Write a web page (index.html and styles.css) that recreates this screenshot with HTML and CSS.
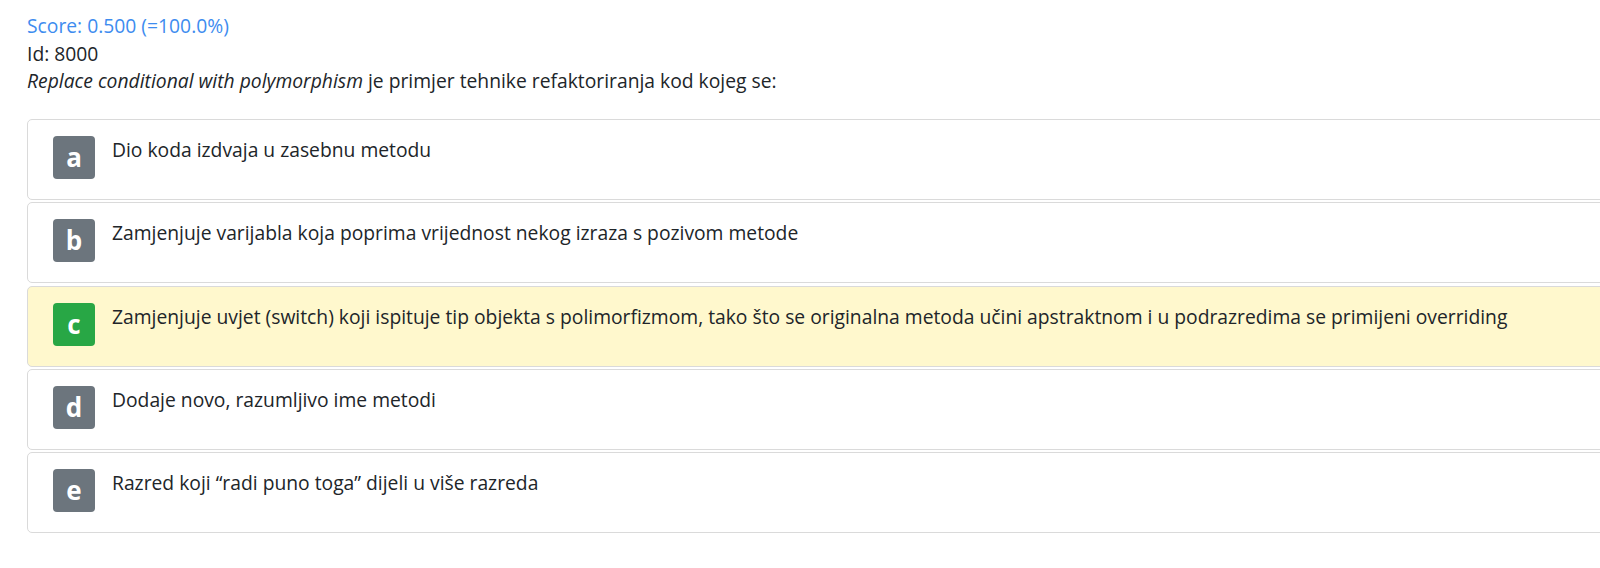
FILE: index.html
```html
<!DOCTYPE html>
<html lang="hr">
<head>
<meta charset="utf-8">
<title>Question 8000</title>
<link rel="stylesheet" href="styles.css">
</head>
<body>
<div class="page">
  <div class="score">Score: 0.500 (=100.0%)</div>
  <div class="line">Id: 8000</div>
  <div class="line"><em>Replace conditional with polymorphism</em> je primjer tehnike refaktoriranja kod kojeg se:</div>
  <div class="answers">
    <div class="answer">
      <span class="badge">a</span>
      <span class="text">Dio koda izdvaja u zasebnu metodu</span>
    </div>
    <div class="answer">
      <span class="badge">b</span>
      <span class="text">Zamjenjuje varijabla koja poprima vrijednost nekog izraza s pozivom metode</span>
    </div>
    <div class="answer correct">
      <span class="badge">c</span>
      <span class="text">Zamjenjuje uvjet (switch) koji ispituje tip objekta s polimorfizmom, tako što se originalna metoda učini apstraktnom i u podrazredima se primijeni overriding</span>
    </div>
    <div class="answer">
      <span class="badge">d</span>
      <span class="text">Dodaje novo, razumljivo ime metodi</span>
    </div>
    <div class="answer">
      <span class="badge">e</span>
      <span class="text">Razred koji “radi puno toga” dijeli u više razreda</span>
    </div>
  </div>
</div>
</body>
</html>
```
FILE: styles.css
```css
html, body {
  margin: 0;
  padding: 0;
  background: #ffffff;
  overflow: hidden;
}
body {
  font-family: "Open Sans", "Noto Sans", sans-serif;
  font-size: 19.3px;
  line-height: 27.5px;
  color: #212529;
}
.page {
  padding: 12px 0 0 27px;
}
.score {
  color: #3e8cef;
}
.line em {
  font-style: italic;
}
.answers {
  margin-top: 24.5px;
  width: 1640px;
}
.answer {
  display: flex;
  align-items: flex-start;
  box-sizing: border-box;
  height: 81px;
  padding: 16px 25px;
  margin-bottom: 2.3px;
  border: 1px solid #dadada;
  border-radius: 5px;
  background: #ffffff;
}
.answer.correct {
  background: #fff8cd;
}
.badge {
  flex: none;
  width: 42px;
  height: 43px;
  border-radius: 4px;
  background: #6c757d;
  color: #ffffff;
  font-weight: 700;
  font-size: 26px;
  line-height: 42px;
  text-align: center;
}
.answer.correct .badge {
  background: #28a745;
}
.text {
  margin-left: 17px;
  line-height: 27px;
}
```
